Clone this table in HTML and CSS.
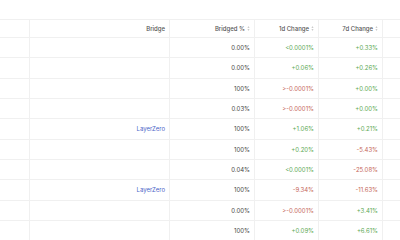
FILE: index.html
```html
<!DOCTYPE html>
<html>
<head>
<meta charset="utf-8">
<link rel="stylesheet" href="styles.css">
</head>
<body>
<div class="wrap">
  <div class="table">
    <div class="cell head"></div>
    <div class="cell head"><span>Bridge</span></div>
    <div class="cell head"><span>Bridged %</span><svg class="sort" viewBox="0 0 4 7"><path d="M2 0.5 L3.5 2.6 H0.5 Z M2 6.5 L3.5 4.4 H0.5 Z"/></svg></div>
    <div class="cell head"><span>1d Change</span><svg class="sort" viewBox="0 0 4 7"><path d="M2 0.5 L3.5 2.6 H0.5 Z M2 6.5 L3.5 4.4 H0.5 Z"/></svg></div>
    <div class="cell head"><span>7d Change</span><svg class="sort" viewBox="0 0 4 7"><path d="M2 0.5 L3.5 2.6 H0.5 Z M2 6.5 L3.5 4.4 H0.5 Z"/></svg></div>
    <div class="cell head"></div>

    <div class="cell"></div><div class="cell"></div><div class="cell">0.00%</div><div class="cell up">&lt;0.0001%</div><div class="cell up">+0.33%</div><div class="cell"></div>
    <div class="cell"></div><div class="cell"></div><div class="cell">0.00%</div><div class="cell up">+0.06%</div><div class="cell up">+0.26%</div><div class="cell"></div>
    <div class="cell"></div><div class="cell"></div><div class="cell">100%</div><div class="cell down">&gt;-0.0001%</div><div class="cell up">+0.00%</div><div class="cell"></div>
    <div class="cell"></div><div class="cell"></div><div class="cell">0.03%</div><div class="cell down">&gt;-0.0001%</div><div class="cell up">+0.00%</div><div class="cell"></div>
    <div class="cell"></div><div class="cell link">LayerZero</div><div class="cell">100%</div><div class="cell up">+1.06%</div><div class="cell up">+0.21%</div><div class="cell"></div>
    <div class="cell"></div><div class="cell"></div><div class="cell">100%</div><div class="cell up">+0.20%</div><div class="cell down">-5.43%</div><div class="cell"></div>
    <div class="cell"></div><div class="cell"></div><div class="cell">0.04%</div><div class="cell up">&lt;0.0001%</div><div class="cell down">-25.08%</div><div class="cell"></div>
    <div class="cell"></div><div class="cell link">LayerZero</div><div class="cell">100%</div><div class="cell down">-9.34%</div><div class="cell down">-11.63%</div><div class="cell"></div>
    <div class="cell"></div><div class="cell"></div><div class="cell">0.00%</div><div class="cell down">&gt;-0.0001%</div><div class="cell up">+3.41%</div><div class="cell"></div>
    <div class="cell"></div><div class="cell"></div><div class="cell">100%</div><div class="cell up">+0.09%</div><div class="cell up">+6.61%</div><div class="cell"></div>
  </div>
</div>
</body>
</html>
```
FILE: styles.css
```css
html, body {
  margin: 0;
  padding: 0;
  background: #ffffff;
}
.wrap {
  width: 400px;
  height: 240px;
  overflow: hidden;
  padding-top: 19px;
  box-sizing: border-box;
}
.table {
  display: grid;
  grid-template-columns: 31px 140px 85px 64px 64px 60px;
  grid-template-rows: 18px;
  grid-auto-rows: 20.33px;
  width: 444px;
  margin-left: -1px;
  border-top: 1px solid #f0f0f0;
  font-family: Inter, "Noto Sans", sans-serif;
  font-size: 6px;
  color: #444;
}
.cell {
  border-bottom: 1px solid #f0f0f0;
  border-right: 1px solid #f0f0f0;
  display: flex;
  align-items: center;
  justify-content: flex-end;
  padding: 0 4px 0 4px;
  box-sizing: border-box;
  white-space: nowrap;
}
.head {
  color: #555;
  font-weight: 500;
}
.sort {
  width: 3px;
  height: 5px;
  margin-left: 2px;
  fill: #bbb;
}
.up { color: #5ba854; }
.down { color: #c5675a; }
.link { color: #4a64c8; }
```
